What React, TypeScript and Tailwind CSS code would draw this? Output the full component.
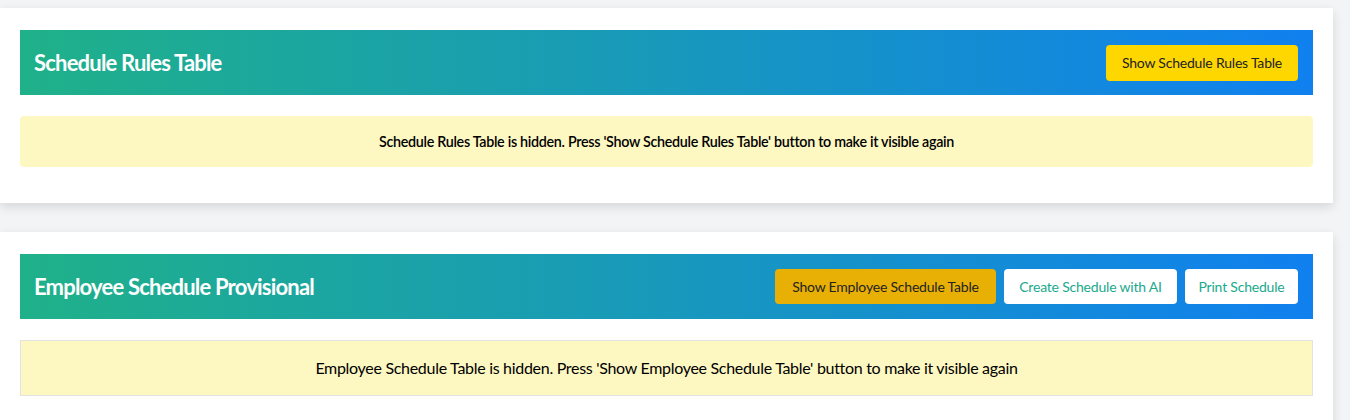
import React from "react";

const font = { fontFamily: "Lato, 'Open Sans', sans-serif" };

export default function App() {
  return (
    <div className="min-h-screen bg-[#f3f4f6] pt-2" style={font}>
      <div className="mr-[17px] bg-white px-5 pt-[22px] pb-9 shadow-[0_4px_10px_rgba(0,0,0,0.12)]">
        <div className="flex h-[65px] items-center justify-between bg-[linear-gradient(to_right,#1fb189,#1080ef)] pl-[14px] pr-[15px]">
          <h2 className="text-[22px] font-bold tracking-[-0.8px] text-white">Schedule Rules Table</h2>
          <button className="h-9 w-[192px] rounded bg-[#ffd700] text-[14px] tracking-[-0.2px] text-[#222]">
            Show Schedule Rules Table
          </button>
        </div>
        <div className="mt-[21px] flex h-[51px] items-center justify-center rounded bg-[#fdf7c2] text-[14.3px] font-semibold tracking-[-0.3px] text-black">
          Schedule Rules Table is hidden. Press 'Show Schedule Rules Table' button to make it visible again
        </div>
      </div>

      <div className="mr-[17px] mt-[29px] bg-white px-5 pt-[22px] pb-9 shadow-[0_4px_10px_rgba(0,0,0,0.12)]">
        <div className="flex h-[65px] items-center justify-between bg-[linear-gradient(to_right,#1fb189,#1080ef)] pl-[14px] pr-[15px]">
          <h2 className="text-[22px] font-bold tracking-[-0.8px] text-white">Employee Schedule Provisional</h2>
          <div className="flex gap-2">
            <button className="h-[35px] w-[221px] rounded bg-[#e8b005] text-[14px] tracking-[-0.2px] text-[#222]">
              Show Employee Schedule Table
            </button>
            <button className="h-[35px] w-[173px] rounded bg-white text-[14px] tracking-[-0.2px] text-[#1aa98c]">
              Create Schedule with AI
            </button>
            <button className="h-[35px] w-[113px] rounded bg-white text-[14px] tracking-[-0.2px] text-[#1aa98c]">
              Print Schedule
            </button>
          </div>
        </div>
        <div className="mt-[21px] flex h-[56px] items-center justify-center border border-[#e3e3e3] bg-[#fdf7c2] text-[16px] tracking-[-0.3px] text-black">
          Employee Schedule Table is hidden. Press 'Show Employee Schedule Table' button to make it visible again
        </div>
      </div>
    </div>
  );
}
